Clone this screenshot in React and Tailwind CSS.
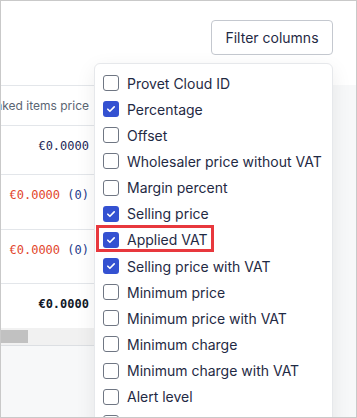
import React from 'react';

const columns = [
    { label: 'Provet Cloud ID', checked: false },
    { label: 'Percentage', checked: true },
    { label: 'Offset', checked: false },
    { label: 'Wholesaler price without VAT', checked: false },
    { label: 'Margin percent', checked: false },
    { label: 'Selling price', checked: true },
    { label: 'Applied VAT', checked: true, highlight: true },
    { label: 'Selling price with VAT', checked: true },
    { label: 'Minimum price', checked: false },
    { label: 'Minimum price with VAT', checked: false },
    { label: 'Minimum charge', checked: false },
    { label: 'Minimum charge with VAT', checked: false },
    { label: 'Alert level', checked: false },
    { label: 'Order level', checked: false },
];

const Checkbox = ({ checked }) => (
    checked ? (
        <span className="flex h-4 w-4 shrink-0 items-center justify-center rounded-[3px] bg-[#3451d1]">
            <svg viewBox="0 0 16 16" className="h-4 w-4" fill="none">
                <path d="M4.8 8.2l2.1 2.1 4.3-4.4" stroke="#fff" strokeWidth="1.6" strokeLinecap="round" strokeLinejoin="round" />
            </svg>
        </span>
    ) : (
        <span className="h-4 w-4 shrink-0 rounded-[3px] border border-[#6f7683] bg-white"></span>
    )
);

const Row = ({ height, children, last }) => (
    <div className={`flex ${height} ${last ? '' : 'border-b border-[#e3e6ea]'}`}>
        <div className="flex w-[100px] shrink-0 justify-end overflow-hidden pr-3 pt-[11px]">
            <span className="shrink-0 whitespace-nowrap font-['DejaVu_Sans_Mono',monospace] text-[12px] leading-[18px]">
                {children}
            </span>
        </div>
    </div>
);

export default function App() {
    return (
        <div className="relative h-[418px] w-[357px] overflow-hidden border border-[#c9c9c9] bg-[#f7f8f9] font-['Inter',sans-serif]">
            {/* toolbar */}
            <div className="flex h-[84px] justify-end bg-white pr-[23px] pt-[19px]">
                <button className="h-[35px] w-[122px] rounded-[4px] border border-[#c4c8cf] bg-white text-[14px] text-[#1f2a44]">
                    Filter columns
                </button>
            </div>

            {/* table */}
            <div className="w-[332px] bg-white">
                <div className="flex h-[41px] border-y border-[#e3e6ea]">
                    <div className="flex w-[100px] shrink-0 items-center justify-end overflow-hidden pr-3">
                        <span className="shrink-0 whitespace-nowrap text-[12px] text-[#5b6573]">Linked items price</span>
                    </div>
                </div>
                <Row height="h-[49px]">
                    <span className="text-[#1d2757]">€0.0000</span>
                </Row>
                <Row height="h-[55px]">
                    <span className="text-[#e2462c]">€0.0000</span>{' '}
                    <span className="text-[#1e3a8a]">(0)</span>
                </Row>
                <Row height="h-[54px]">
                    <span className="text-[#e2462c]">€0.0000</span>{' '}
                    <span className="text-[#1e3a8a]">(0)</span>
                </Row>
                <Row height="h-[44px]" last>
                    <span className="font-bold text-[#111827]">€0.0000</span>
                </Row>
                {/* horizontal scrollbar */}
                <div className="h-[18px] border-b border-[#dcdfe3] bg-[#f1f1f1] pt-[2px]">
                    <div className="h-[13px] w-[27px] bg-[#c1c1c1]"></div>
                </div>
            </div>

            {/* column filter dropdown */}
            <div className="absolute left-[93px] top-[62px] w-[239px] rounded-md border border-[#e6e8eb] bg-white pt-[6px] shadow-[0_6px_20px_rgba(0,0,0,0.08)]">
                {columns.map((col) => (
                    <div key={col.label} className="relative flex h-[26.15px] items-center gap-2 pl-2">
                        <Checkbox checked={col.checked} />
                        <span className="whitespace-nowrap text-[14px] text-[#1f2a44]">{col.label}</span>
                        {col.highlight && (
                            <span className="absolute left-[1px] top-[-2px] h-[27px] w-[118px] border-[3px] border-[#e8383d]"></span>
                        )}
                    </div>
                ))}
            </div>
        </div>
    );
}
